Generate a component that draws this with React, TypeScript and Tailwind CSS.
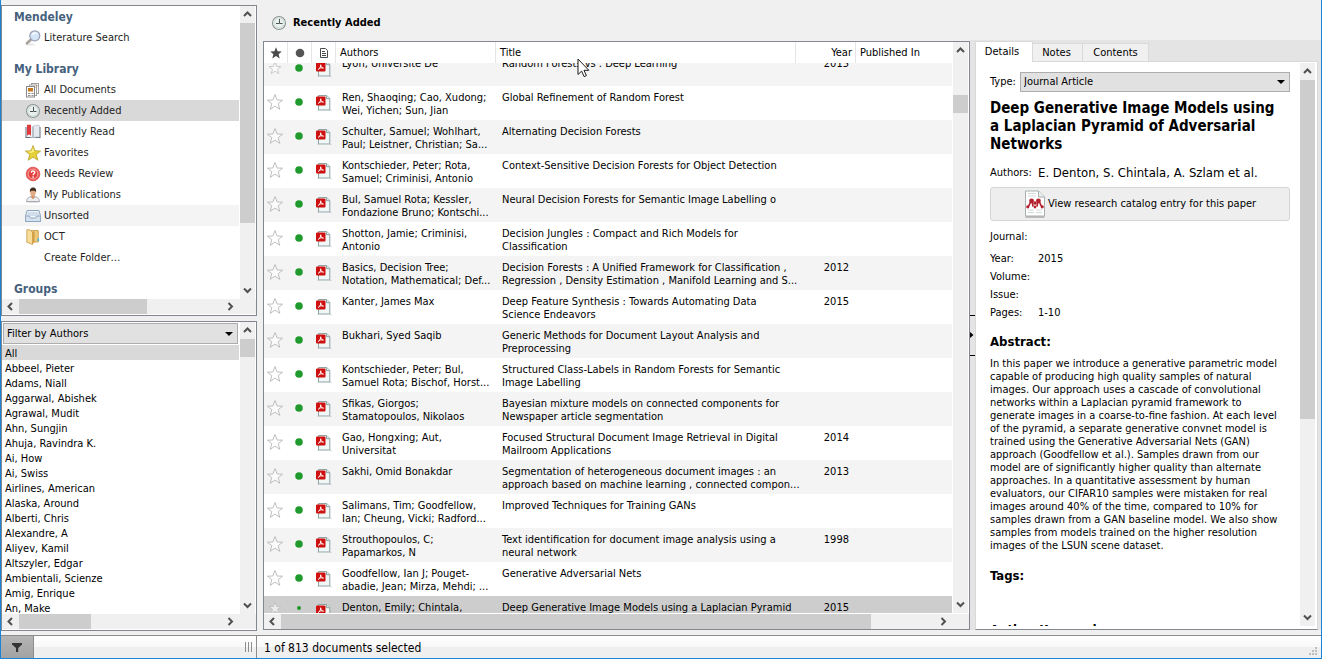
import { useLayoutEffect, useRef, type ReactNode } from 'react';

/* ---------- icons ---------- */

function SearchIcon() {
  return (
    <svg width="16" height="16" viewBox="0 0 16 16" aria-hidden="true">
      <ellipse cx="5" cy="14.6" rx="4.5" ry="1" fill="#e6e6e6" />
      <path d="M6 9.5 2 13.3" stroke="#a7a29c" strokeWidth="2.6" strokeLinecap="round" />
      <circle cx="9.8" cy="5.8" r="5" fill="#d3e5f6" stroke="#9aa0b4" strokeWidth="1.2" />
      <path d="M6.4 5.6a3.5 3.5 0 0 1 6.6-1.4c-2.4-.3-4.4.2-6.6 1.4z" fill="#f6fbff" />
    </svg>
  );
}

function DocumentsIcon() {
  return (
    <svg width="16" height="16" viewBox="0 0 16 16" aria-hidden="true">
      <rect x="6.5" y="1.5" width="7" height="10" fill="#fff" stroke="#a0a0a0" />
      <rect x="8" y="3" width="4.5" height="1.5" fill="#c9925a" />
      <rect x="4.5" y="3" width="7" height="10.5" fill="#fff" stroke="#a0a0a0" />
      <rect x="6" y="4.5" width="4.5" height="1.5" fill="#c9925a" />
      <rect x="1.5" y="4.5" width="8" height="10.5" fill="#fff" stroke="#8a8a8a" />
      <rect x="3" y="6" width="5" height="3.5" fill="#c8781e" />
      <path d="M3 11.5h2.500M3 13.500h2.500M6.500 11.500H8.500M6.500 13.500H8.500" stroke="#8d8d8d" />
    </svg>
  );
}

function ClockIcon() {
  return (
    <svg width="16" height="16" viewBox="0 0 16 16" aria-hidden="true">
      <circle cx="8" cy="8" r="6.5" fill="#e9f0ee" stroke="#8d9594" strokeWidth="1.1" />
      <circle cx="8" cy="8" r="5.2" fill="none" stroke="#cfdcd9" strokeWidth="1.2" />
      <path d="M8.500 4v4.500H11.500M5 8.500h3" stroke="#4c5453" fill="none" />
    </svg>
  );
}

function BookIcon() {
  return (
    <svg width="16" height="16" viewBox="0 0 16 16" aria-hidden="true">
      <path d="M.5 3v11h15V3z" fill="#5f6a78" />
      <path d="M1.500 1.500C4 .8 6.500 1 8 2.200V14C6 13 4 12.700 1.500 13z" fill="#eef1f4" />
      <path d="M14.500 1.500C12 .8 9.500 1 8 2.200V14c2-1 4-1.300 6.500-1z" fill="#e3e9ee" stroke="#aab3bb" strokeWidth=".5" />
      <path d="M2 .8h4v11l-2-1.600-2 1.600z" fill="#e0393d" />
      <path d="M8 2.500V14" stroke="#98a2ab" />
    </svg>
  );
}

function GoldStarIcon() {
  return (
    <svg width="16" height="16" viewBox="0 0 16 16" aria-hidden="true">
      <path
        d="M8 .6 10 5.700l5.600.4-4.300 3.500 1.500 5.600L8 12.100l-4.800 3.100 1.500-5.600L.4 6.100 6 5.700z"
        fill="#e6d138"
        stroke="#b8a02c"
        strokeWidth=".8"
        strokeLinejoin="round"
      />
      <path d="M8 2.400 9.300 6.500 6 8 2.500 6.700 6.500 6.300z" fill="#f8ee86" />
    </svg>
  );
}

function QuestionIcon() {
  return (
    <svg width="16" height="16" viewBox="0 0 16 16" aria-hidden="true">
      <circle cx="8" cy="8" r="6.800" fill="#ee5a55" stroke="#d94545" strokeWidth=".8" />
      <circle cx="8" cy="8" r="4.900" fill="#e2403e" stroke="#f5b3b0" strokeWidth=".9" />
      <path d="M6.300 6.700c0-2.300 3.500-2.200 3.500-.2 0 1.300-1.700 1.300-1.700 2.700" stroke="#fff" strokeWidth="1.300" fill="none" />
      <circle cx="8.100" cy="11" r=".85" fill="#fff" />
    </svg>
  );
}

function PersonIcon() {
  return (
    <svg width="16" height="16" viewBox="0 0 16 16" aria-hidden="true">
      <ellipse cx="8" cy="14.800" rx="7" ry="1" fill="#d4d4d4" />
      <path d="M1.500 14.500c0-3 2-4.300 4.500-4.900h4c2.500.6 4.500 1.900 4.500 4.900z" fill="#eceef0" stroke="#9a9fa5" strokeWidth=".8" />
      <path d="M6.300 9h3.400v1.500L8 12.200 6.300 10.500z" fill="#cf9366" />
      <ellipse cx="8" cy="5.800" rx="2.700" ry="3.600" fill="#e2ad84" />
      <path d="M5 5.500C4.400 2 6 .6 8.200.6s3.500 1.700 2.800 4.900C10.600 4 9.800 3.600 8 3.700 6.200 3.600 5.400 4 5 5.500z" fill="#3f2c20" />
    </svg>
  );
}

function TrayIcon() {
  return (
    <svg width="16" height="16" viewBox="0 0 16 16" aria-hidden="true">
      <path d="M2 2.500h12L15.500 8v5.500H.5V8z" fill="#eef4fa" stroke="#8fa5bd" />
      <path d="M2.500 5h11M2 7h12" stroke="#b4c7db" />
      <path d="M.5 8h3.700l1.300 2h5l1.300-2h3.700v5.500H.5z" fill="#d3e0ee" stroke="#8fa5bd" strokeWidth=".9" />
    </svg>
  );
}

function FolderIcon() {
  return (
    <svg width="16" height="16" viewBox="0 0 16 16" aria-hidden="true">
      <path d="M6 1.500h7.300V13H6z" fill="#edc878" stroke="#c79b4a" strokeWidth=".8" />
      <path d="M1.800.8h3l2.700 2.200V15.600L1.800 13.200z" fill="#f8dd98" stroke="#c79b4a" strokeWidth=".8" />
      <path d="M7.500 3v12.500l2-2.500V2z" fill="#d39f45" />
      <rect x="12.500" y="9.500" width="1.600" height="2.600" fill="#3fb6e6" />
    </svg>
  );
}

function OutlineStar({ small = false }: { small?: boolean }) {
  const s = small ? 14 : 18;
  return (
    <svg width={s} height={s} viewBox="0 0 18 18" className="block" aria-hidden="true">
      <path
        d="M9 1.500 11.100 7l5.500.2-4.400 3.500 1.600 5.600L9 13.100l-4.800 3.200 1.600-5.600L1.400 7.200 6.900 7z"
        fill="#fff"
        fillOpacity=".6"
        stroke="#bfbfbf"
      />
    </svg>
  );
}

function PdfIcon() {
  return (
    <svg width="16" height="17" viewBox="0 0 16 17" className="block" aria-hidden="true">
      <path d="M2.500 1.500h8.300l3 3V16H2.500z" fill="#f1f7f7" stroke="#8ea3a4" />
      <path d="M10.500 1.500v3.200h3.300" fill="#dfe9e9" stroke="#8ea3a4" />
      <path d="M1.500 16.500h14" stroke="#c9d2d2" />
      <rect x="0" y="2.500" width="9.500" height="9" rx="1" fill="#cf1010" />
      <path d="M4.700 4.500c.3 2-1 4.200-2.600 5.200M4.700 5c.1 1.700 1 2.900 2.800 3.200M2.800 8.600c1.400-.9 2.900-1 4.700-.5" stroke="#fff" strokeWidth=".9" fill="none" />
    </svg>
  );
}

function CatalogIcon() {
  return (
    <svg width="22" height="28" viewBox="0 0 22 28" aria-hidden="true">
      <path d="M1.500 27h19" stroke="#bdbdbd" strokeWidth="2" />
      <path d="M1.500 1h13l6 6v19h-19z" fill="#fff" stroke="#a9b0b0" />
      <path d="M14.500 1v6h6" fill="#e9eeee" stroke="#a9b0b0" />
      <path d="M4 3.500h8M4 6h8M4 20h6M12 20h6M4 22.500h6M12 22.500h6" stroke="#d2dadc" />
      <g fill="#b3202e">
        <circle cx="7.600" cy="10.800" r="2.400" />
        <circle cx="14.400" cy="10.800" r="2.400" />
        <circle cx="11" cy="13" r="1.800" />
        <circle cx="3.800" cy="16.800" r="1.600" />
        <circle cx="11" cy="17" r="1.400" />
        <circle cx="18.200" cy="16.800" r="1.600" />
      </g>
      <path d="M4 16c2.200-.4 1.200-3 3-4.500M18 16c-2.200-.4-1.200-3-3-4.500M8 12c1 1.500.6 3 1 4.500M14 12c-1 1.500-.6 3-1 4.500" stroke="#b3202e" strokeWidth="1.700" fill="none" />
    </svg>
  );
}

function Arrow({ dir }: { dir: 'up' | 'down' | 'left' | 'right' }) {
  const d = {
    up: 'M1 6 4.500 2.500 8 6',
    down: 'M1 2.500 4.500 6 8 2.500',
    left: 'M6 1 2.500 4.500 6 8',
    right: 'M2.500 1 6 4.500 2.500 8',
  }[dir];
  return (
    <svg width="9" height="9" viewBox="0 0 9 9" aria-hidden="true">
      <path d={d} fill="none" stroke="#505050" strokeWidth="2" />
    </svg>
  );
}

/* ---------- scroll bars ---------- */

type Bar = { before: number; size: number; after: number };

function VBar({ before, size, after }: Bar) {
  return (
    <div className="flex w-[15px] shrink-0 flex-col bg-[#f0f0f0]">
      <button aria-label="Scroll up" className="flex h-[17px] shrink-0 items-center justify-center"><Arrow dir="up" /></button>
      <div className="flex min-h-0 flex-1 flex-col">
        <div style={{ flexGrow: before }} />
        <div className="bg-[#cdcdcd]" style={{ flexGrow: size }} />
        <div style={{ flexGrow: after }} />
      </div>
      <button aria-label="Scroll down" className="flex h-[17px] shrink-0 items-center justify-center"><Arrow dir="down" /></button>
    </div>
  );
}

function HBar({ before, size, after }: Bar) {
  return (
    <div className="flex h-[15px] shrink-0 bg-[#f0f0f0] pr-[17px]">
      <button aria-label="Scroll left" className="flex w-[17px] shrink-0 items-center justify-center"><Arrow dir="left" /></button>
      <div className="flex min-w-0 flex-1">
        <div style={{ flexGrow: before }} />
        <div className="bg-[#cdcdcd]" style={{ flexGrow: size }} />
        <div style={{ flexGrow: after }} />
      </div>
      <button aria-label="Scroll right" className="flex w-[17px] shrink-0 items-center justify-center"><Arrow dir="right" /></button>
    </div>
  );
}

function Picker({ id, label, value, className }: { id: string; label: string; value: string; className: string }) {
  return (
    <div className={`relative flex ${className}`}>
      <select id={id} aria-label={label} className="w-full appearance-none border border-[#adadad] bg-[#e1e1e1] px-[3px] leading-4 outline-none">
        <option>{value}</option>
      </select>
      <svg width="8" height="4" viewBox="0 0 8 4" className="pointer-events-none absolute top-1/2 right-[5px] -translate-y-1/2" aria-hidden="true">
        <path d="M0 0h8L4 4z" fill="#000" />
      </svg>
    </div>
  );
}

/* ---------- data ---------- */

const library: { name: string; icon?: ReactNode; tone?: string }[] = [
  { name: 'All Documents', icon: <DocumentsIcon /> },
  { name: 'Recently Added', icon: <ClockIcon />, tone: 'bg-[#d9d9d9]' },
  { name: 'Recently Read', icon: <BookIcon /> },
  { name: 'Favorites', icon: <GoldStarIcon /> },
  { name: 'Needs Review', icon: <QuestionIcon /> },
  { name: 'My Publications', icon: <PersonIcon /> },
  { name: 'Unsorted', icon: <TrayIcon />, tone: 'bg-[#f4f4f4]' },
  { name: 'OCT', icon: <FolderIcon /> },
  { name: 'Create Folder…' },
];

const authors = [
  'All', 'Abbeel, Pieter', 'Adams, Niall', 'Aggarwal, Abishek', 'Agrawal, Mudit', 'Ahn, Sungjin',
  'Ahuja, Ravindra K.', 'Ai, How', 'Ai, Swiss', 'Airlines, American', 'Alaska, Around', 'Alberti, Chris',
  'Alexandre, A', 'Aliyev, Kamil', 'Altszyler, Edgar', 'Ambientali, Scienze', 'Amig, Enrique', 'An, Make',
];

const papers: { a: string; t: string; y?: string }[] = [
  { a: 'Lyon, Universite De', t: 'Random Forests vs . Deep Learning', y: '2015' },
  { a: 'Ren, Shaoqing; Cao, Xudong;\nWei, Yichen; Sun, Jian', t: 'Global Refinement of Random Forest' },
  { a: 'Schulter, Samuel; Wohlhart,\nPaul; Leistner, Christian; Sa...', t: 'Alternating Decision Forests' },
  { a: 'Kontschieder, Peter; Rota,\nSamuel; Criminisi, Antonio', t: 'Context-Sensitive Decision Forests for Object Detection' },
  { a: 'Bul, Samuel Rota; Kessler,\nFondazione Bruno; Kontschi...', t: 'Neural Decision Forests for Semantic Image Labelling o' },
  { a: 'Shotton, Jamie; Criminisi,\nAntonio', t: 'Decision Jungles : Compact and Rich Models for\nClassification' },
  { a: 'Basics, Decision Tree;\nNotation, Mathematical; Def...', t: 'Decision Forests : A Unified Framework for Classification ,\nRegression , Density Estimation , Manifold Learning and S...', y: '2012' },
  { a: 'Kanter, James Max', t: 'Deep Feature Synthesis : Towards Automating Data\nScience Endeavors', y: '2015' },
  { a: 'Bukhari, Syed Saqib', t: 'Generic Methods for Document Layout Analysis and\nPreprocessing' },
  { a: 'Kontschieder, Peter; Bul,\nSamuel Rota; Bischof, Horst...', t: 'Structured Class-Labels in Random Forests for Semantic\nImage Labelling' },
  { a: 'Sfikas, Giorgos;\nStamatopoulos, Nikolaos', t: 'Bayesian mixture models on connected components for\nNewspaper article segmentation' },
  { a: 'Gao, Hongxing; Aut,\nUniversitat', t: 'Focused Structural Document Image Retrieval in Digital\nMailroom Applications', y: '2014' },
  { a: 'Sakhi, Omid Bonakdar', t: 'Segmentation of heterogeneous document images : an\napproach based on machine learning , connected compon...', y: '2013' },
  { a: 'Salimans, Tim; Goodfellow,\nIan; Cheung, Vicki; Radford...', t: 'Improved Techniques for Training GANs' },
  { a: 'Strouthopoulos, C;\nPapamarkos, N', t: 'Text identification for document image analysis using a\nneural network', y: '1998' },
  { a: 'Goodfellow, Ian J; Pouget-\nabadie, Jean; Mirza, Mehdi; ...', t: 'Generative Adversarial Nets' },
  { a: 'Denton, Emily; Chintala,', t: 'Deep Generative Image Models using a Laplacian Pyramid', y: '2015' },
];

const abstract = `In this paper we introduce a generative parametric model
capable of producing high quality samples of natural
images. Our approach uses a cascade of convolutional
networks within a Laplacian pyramid framework to
generate images in a coarse-to-fine fashion. At each level
of the pyramid, a separate generative convnet model is
trained using the Generative Adversarial Nets (GAN)
approach (Goodfellow et al.). Samples drawn from our
model are of significantly higher quality than alternate
approaches. In a quantitative assessment by human
evaluators, our CIFAR10 samples were mistaken for real
images around 40% of the time, compared to 10% for
samples drawn from a GAN baseline model. We also show
samples from models trained on the higher resolution
images of the LSUN scene dataset.`;

/* ---------- panels ---------- */

function TreeItem({ name, icon, tone = '' }: { name: string; icon?: ReactNode; tone?: string }) {
  return (
    <li className={tone}>
      <a href="#" className="flex h-[21px] items-center gap-[3px] pl-[23px] text-[#1e1e1e]">
        <span className="w-4 shrink-0">{icon}</span>
        <span className="pt-px">{name}</span>
      </a>
    </li>
  );
}

function Sidebar() {
  const heading = 'h-[21px] pl-3 text-xs leading-[23px] font-bold text-[#46617d]';
  return (
    <aside className="flex w-64 shrink-0 flex-col gap-[5px] pb-1">
      <nav className="flex flex-col border border-[#828790] bg-white pb-px">
        <div className="flex gap-px pr-px">
          <div className="flex-1">
            <h2 className={heading}>Mendeley</h2>
            <ul className="mb-2.5"><TreeItem name="Literature Search" icon={<SearchIcon />} /></ul>
            <h2 className={heading}>My Library</h2>
            <ul className="mb-2.5">
              {library.map((item) => <TreeItem key={item.name} {...item} />)}
            </ul>
            <h2 className={heading}>Groups</h2>
          </div>
          <VBar before={0} size={200} after={59} />
        </div>
        <HBar before={0} size={128} after={75} />
      </nav>
      <section className="flex min-h-0 flex-1 flex-col border border-[#828790] bg-white pb-px">
        <div className="flex min-h-0 flex-1 gap-px pr-px">
          <div className="flex flex-1 flex-col overflow-hidden">
            <Picker id="author-filter" label="Author filter" value="Filter by Authors" className="m-px h-[21px] shrink-0" />
            <ul className="min-h-0 flex-1 overflow-hidden">
              {authors.map((name, i) => (
                <li key={name} className={`h-[15px] pl-[3px] leading-[17px] ${i === 0 ? 'bg-[#d9d9d9]' : ''}`}>{name}</li>
              ))}
            </ul>
          </div>
          <VBar before={0} size={18} after={239} />
        </div>
        <HBar before={0} size={72} after={131} />
      </section>
    </aside>
  );
}

function DocumentTable() {
  const scroller = useRef<HTMLDivElement>(null);
  useLayoutEffect(() => {
    if (scroller.current) scroller.current.scrollTop = 11;
  }, []);
  const th = 'sticky top-0 z-10 h-[21px] border-r border-[#e5e5e5] bg-white p-0 font-normal';
  const cell = 'h-[34px] p-0 pt-[5px] align-top leading-[13px] whitespace-pre';
  return (
    <main className="flex min-w-0 flex-1 flex-col pb-[5px] pl-1.5">
      <h1 className="flex h-9 shrink-0 items-center gap-1.5 pl-2 font-bold">
        <ClockIcon />
        Recently Added
      </h1>
      <div className="flex min-h-0 flex-1 flex-col border border-[#828790] bg-white">
        <div className="flex min-h-0 flex-1 gap-px pr-px">
          <div ref={scroller} className="min-w-0 flex-1 overflow-hidden">
            <table className="w-full table-fixed border-separate border-spacing-0">
              <colgroup>
                <col className="w-6" />
                <col className="w-6" />
                <col className="w-6" />
                <col className="w-40" />
                <col className="w-[300px]" />
                <col className="w-[60px]" />
                <col />
              </colgroup>
              <thead>
                <tr>
                  <th className={th} aria-label="Favorite">
                    <svg width="12" height="12" viewBox="0 0 12 12" className="mx-auto" aria-hidden="true">
                      <path d="M6 .3 7.600 4.300l4.200.2-3.200 2.700 1.100 4.300L6 9.100l-3.700 2.400 1.100-4.300L.2 4.500l4.200-.2z" fill="#4a4a4a" />
                    </svg>
                  </th>
                  <th className={th} aria-label="Read">
                    <svg width="10" height="10" viewBox="0 0 10 10" className="mx-auto" aria-hidden="true">
                      <circle cx="5" cy="5" r="4.300" fill="#555" />
                    </svg>
                  </th>
                  <th className={th} aria-label="File">
                    <svg width="10" height="12" viewBox="0 0 10 12" className="mx-auto" aria-hidden="true">
                      <path d="M1.500 1.500h5l2 2v7h-7z" fill="#fff" stroke="#4a4a4a" />
                      <path d="M3 4.500h3M3 6.500h4M3 8.500h4" stroke="#4a4a4a" />
                    </svg>
                  </th>
                  <th className={`${th} pl-1 text-left`}>Authors</th>
                  <th className={`${th} pl-1 text-left`}>Title</th>
                  <th className={`${th} pr-[3px] text-right`}>Year</th>
                  <th className="sticky top-0 z-10 bg-white p-0 pl-1 text-left font-normal">Published In</th>
                </tr>
              </thead>
              <tbody>
                {papers.map((p, i) => {
                  const last = i === papers.length - 1;
                  const small = last || i === 0;
                  const icon = last ? 'p-0 pt-[5px] align-top' : 'p-0 pb-0.5 align-middle';
                  return (
                    <tr key={p.t} className={last ? 'bg-[#cdcdcd]' : i % 2 === 0 ? 'bg-[#f4f4f4]' : 'bg-white'}>
                      <td className={icon}>
                        <button aria-label="Mark as favorite" className="mx-auto block w-fit pr-0.5"><OutlineStar small={small} /></button>
                      </td>
                      <td className={`${icon} pr-0.5`}>
                        <svg width="8" height={last ? 14 : 8} viewBox="0 0 8 8" className="mx-auto" aria-hidden="true">
                          <circle cx="4" cy="4" r={last ? 2 : 3.8} fill="#1f9a2c" />
                        </svg>
                      </td>
                      <td className={icon}>
                        <div className={last ? 'pt-0.5 pl-1' : 'pl-1'}><PdfIcon /></div>
                      </td>
                      <td className={`${cell} pl-1.5`}>{p.a}</td>
                      <td className={`${cell} pl-1.5`}>{p.t}</td>
                      <td className={`${cell} pr-[7px] text-right`}>{p.y}</td>
                      <td className={cell} />
                    </tr>
                  );
                })}
              </tbody>
            </table>
          </div>
          <VBar before={36} size={18} after={483} />
        </div>
        <div className="pt-px"><HBar before={0} size={590} after={64} /></div>
      </div>
    </main>
  );
}

function Field({ name, value }: { name: string; value?: string }) {
  return (
    <div className="flex h-[18px] items-center">
      <dt className="w-12">{name}</dt>
      <dd>{value}</dd>
    </div>
  );
}

function DetailsPanel() {
  const idle = 'mt-0.5 h-[19px] border-t border-r border-[#d9d9d9] bg-[#f0f0f0]';
  return (
    <aside className="mt-[35px] mb-[5px] flex w-[351px] shrink-0 bg-[#e4e4e4]">
      <div className="flex w-[5px] shrink-0 items-center">
        <button aria-label="Collapse panel" className="flex h-[41px] w-full items-center border-y border-black">
          <svg width="4" height="6" viewBox="0 0 4 6" aria-hidden="true"><path d="M0 0l3.500 3L0 6z" fill="#000" /></svg>
        </button>
      </div>
      <div className="flex min-w-0 flex-1 flex-col pt-px">
        <div role="tablist" className="flex h-5 shrink-0">
          <button role="tab" aria-selected="true" className="z-10 h-[21px] w-[58px] border border-b-0 border-[#d9d9d9] bg-white pr-1">Details</button>
          <button role="tab" aria-selected="false" className={`${idle} w-[50px] pr-0.5`}>Notes</button>
          <button role="tab" aria-selected="false" className={`${idle} w-[66px]`}>Contents</button>
        </div>
        <div className="mr-[3px] flex min-h-0 flex-1 border border-[#d9d9d9] border-b-[#828790] bg-white pt-px pr-0.5 pb-[3px]">
          <div className="min-w-0 flex-1 overflow-hidden pt-[9px] pr-2.5 pl-3.5">
            <div className="flex h-5 items-center">
              <label htmlFor="document-type" className="w-[30px]">Type:</label>
              <Picker id="document-type" label="Document type" value="Journal Article" className="h-5 flex-1" />
            </div>
            <h2 className="mt-[7px] text-[15px] leading-[18px] font-bold whitespace-nowrap">
              Deep Generative Image Models using<br />a Laplacian Pyramid of Adversarial<br />Networks
            </h2>
            <div className="mt-2.5 flex h-5 items-center">
              <span className="w-12">Authors:</span>
              <span className="text-[13px]">E. Denton, S. Chintala, A. Szlam et al.</span>
            </div>
            <button className="mt-1 flex h-[34px] w-full items-center justify-center gap-0.5 rounded-[3px] border border-[#d5d5d5] bg-[#eee]">
              <CatalogIcon />
              View research catalog entry for this paper
            </button>
            <dl className="mt-[7px]">
              <Field name="Journal:" />
              <div className="pt-1"><Field name="Year:" value="2015" /></div>
              <Field name="Volume:" />
              <Field name="Issue:" />
              <Field name="Pages:" value="1-10" />
            </dl>
            <h3 className="mt-2.5 text-[13px] leading-5 font-bold">Abstract:</h3>
            <p className="mt-[5px] leading-[13px] whitespace-pre">{abstract}</p>
            <h3 className="mt-3.5 text-[13px] leading-5 font-bold">Tags:</h3>
            <h3 className="mt-[34px] text-[13px] leading-5 font-bold">Author Keywords:</h3>
          </div>
          <VBar before={0} size={339} after={190} />
        </div>
      </div>
    </aside>
  );
}

function StatusBar() {
  return (
    <footer className="flex h-[23px] shrink-0 border-t border-[#8c8c8c] bg-linear-to-b from-white from-0% via-[#f8f8f8] via-50% to-[#efefef] to-50%">
      <button aria-label="Filter" className="flex w-[33px] items-center justify-center border-r border-[#8c8c8c] bg-linear-to-b from-[#b4b4b4] to-[#a3a3a3]">
        <svg width="10" height="9" viewBox="0 0 10 9" aria-hidden="true"><path d="M0 0h10v1.500L6.200 5v4H4V5L0 1.500z" fill="#333" /></svg>
      </button>
      <div className="flex w-[223px] items-center justify-end border-r border-[#8c8c8c] pr-[3px]">
        <svg width="8" height="10" viewBox="0 0 8 10" aria-hidden="true"><path d="M.5 0v10M3.500 0v10M6.500 0v10" stroke="#8f8f8f" /></svg>
      </div>
      <p className="flex flex-1 items-center pt-0.5 pl-[7px] text-xs">1 of 813 documents selected</p>
      <svg width="10" height="10" viewBox="0 0 10 10" className="mr-0.5 mb-px self-end" aria-hidden="true">
        <path d="M6 0h2v2H6zM3 3h2v2H3zM6 3h2v2H6zM0 6h2v2H0zM3 6h2v2H3zM6 6h2v2H6z" fill="#bdbdbd" />
      </svg>
    </footer>
  );
}

export default function App() {
  return (
    <div className="relative flex h-screen flex-col overflow-hidden border-r border-b border-l border-[#1883d7] bg-[#f0f0f0] pt-[5px] font-['DejaVu_Sans_Condensed','DejaVu_Sans',sans-serif] text-[11px] leading-4 text-black">
      <div className="flex min-h-0 flex-1">
        <Sidebar />
        <DocumentTable />
        <DetailsPanel />
      </div>
      <StatusBar />
      <svg width="13" height="20" viewBox="0 0 13 20" className="absolute top-[58px] left-[576px] z-20" aria-hidden="true">
        <path d="M1 1v15.500l3.600-3.400 2.500 5.500 2.300-1-2.400-5.300h4.800z" fill="#fff" stroke="#1a1a1a" strokeLinejoin="round" />
      </svg>
    </div>
  );
}
